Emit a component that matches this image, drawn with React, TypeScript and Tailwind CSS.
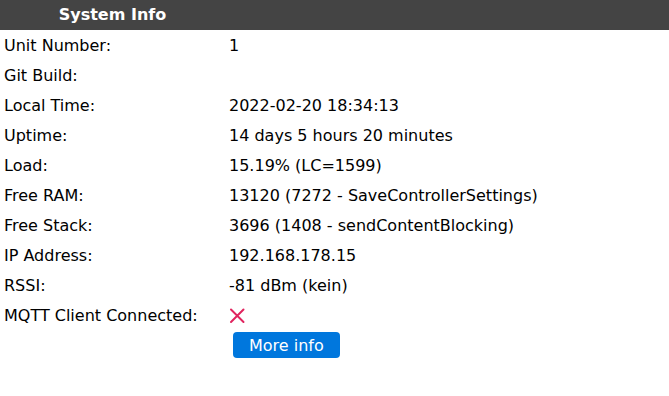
import React from "react";

const rows: [string, string][] = [
  ["Unit Number:", "1"],
  ["Git Build:", ""],
  ["Local Time:", "2022-02-20 18:34:13"],
  ["Uptime:", "14 days 5 hours 20 minutes"],
  ["Load:", "15.19% (LC=1599)"],
  ["Free RAM:", "13120 (7272 - SaveControllerSettings)"],
  ["Free Stack:", "3696 (1408 - sendContentBlocking)"],
  ["IP Address:", "192.168.178.15"],
  ["RSSI:", "-81 dBm (kein)"],
];

export default function App() {
  return (
    <div
      className="w-[669px] h-[396px] bg-white text-[16px] text-black"
      style={{ fontFamily: '"DejaVu Sans", Verdana, sans-serif' }}
    >
      <div className="flex h-[30px] bg-[#444444] items-center">
        <div className="w-[225px] text-center font-bold text-white">System Info</div>
      </div>
      {rows.map(([k, v]) => (
        <div key={k} className="flex h-[30px] items-center pt-[2px]">
          <div className="w-[225px] pl-[4px]">{k}</div>
          <div className="pl-[4px]">{v}</div>
        </div>
      ))}
      <div className="flex h-[30px] items-center pt-[2px]">
        <div className="w-[225px] pl-[4px]">MQTT Client Connected:</div>
        <div className="pl-[4px] flex items-center">
          <svg width="16" height="16" viewBox="0 0 16 16">
            <path d="M2 1.5 L14.5 14 M14.5 1.5 L2 14" stroke="#e0245e" strokeWidth="2" strokeLinecap="round" />
          </svg>
        </div>
      </div>
      <div className="flex">
        <div className="w-[225px]"></div>
        <div className="pl-[4px]">
          <button className="m-[2px] ml-[4px] px-[16px] h-[26px] pt-[1px] leading-[25px] bg-[#0077dd] text-white rounded-[4px]">
            More info
          </button>
        </div>
      </div>
    </div>
  );
}
